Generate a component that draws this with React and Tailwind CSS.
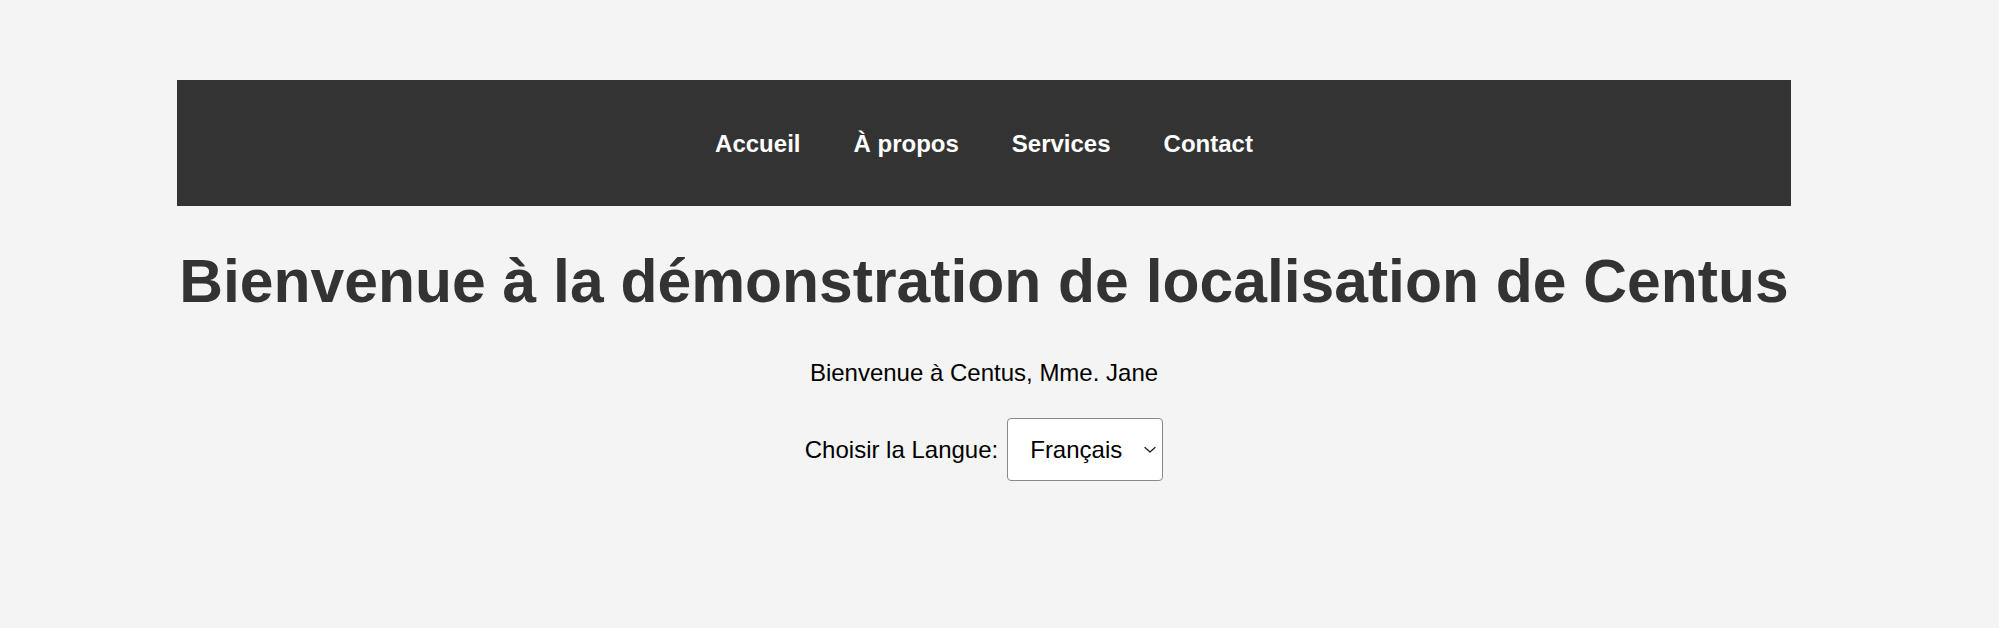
import React from "react";

export default function App() {
  return (
    <div className="min-h-[628px] w-full bg-[#f4f4f4] pt-[80px] font-['Liberation_Sans',Arial,sans-serif]">
      <div className="ml-[177px] w-[1614px]">
        <nav className="flex h-[126px] items-center justify-center gap-[53px] bg-[#333333] pt-[2px]">
          <a href="#" className="text-[24px] font-bold leading-[28px] text-white">Accueil</a>
          <a href="#" className="text-[24px] font-bold leading-[28px] text-white">À propos</a>
          <a href="#" className="text-[24px] font-bold leading-[28px] text-white">Services</a>
          <a href="#" className="text-[24px] font-bold leading-[28px] text-white">Contact</a>
        </nav>
        <h1 className="mt-[40px] whitespace-nowrap text-center text-[60.6px] font-bold leading-[70px] text-[#333333]">
          Bienvenue à la démonstration de localisation de Centus
        </h1>
        <p className="mt-[43px] text-center text-[24px] leading-[28px] text-black">
          Bienvenue à Centus, Mme. Jane
        </p>
        <div className="mt-[31px] flex items-center justify-center">
          <label className="text-[24px] leading-[28px] text-black">Choisir la Langue:</label>
          <div className="relative ml-[9px]">
            <select
              defaultValue="fr"
              className="h-[63px] w-[156px] appearance-none rounded-[4px] border border-[#8a8a8a] bg-white pl-[22px] pr-[30px] text-[24px] leading-[28px] text-black outline-none font-['Liberation_Sans',Arial,sans-serif]"
            >
              <option value="en">English</option>
              <option value="fr">Français</option>
              <option value="es">Español</option>
            </select>
            <svg
              className="pointer-events-none absolute right-[7px] top-[28px]"
              width="12"
              height="8"
              viewBox="0 0 12 8"
              fill="none"
            >
              <path d="M1 1.5 L6 6 L11 1.5" stroke="#222" strokeWidth="1.3" strokeLinecap="round" strokeLinejoin="round" />
            </svg>
          </div>
        </div>
      </div>
    </div>
  );
}
